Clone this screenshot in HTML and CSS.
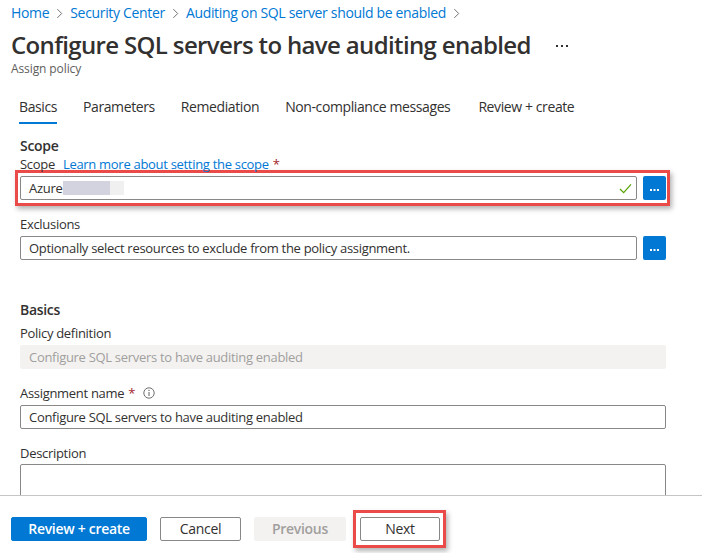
FILE: index.html
```html
<!DOCTYPE html>
<html lang="en">
<head>
<meta charset="utf-8">
<title>Configure SQL servers to have auditing enabled</title>
<link rel="stylesheet" href="styles.css">
</head>
<body>
<div class="page">
  <div class="main">
    <nav class="crumbs">
      <a class="crumb">Home</a>
      <svg class="chev" viewBox="0 0 8 12" width="7" height="11"><path d="M1.5 1 L6.5 6 L1.5 11" fill="none" stroke="#605e5c" stroke-width="1"/></svg>
      <a class="crumb">Security Center</a>
      <svg class="chev" viewBox="0 0 8 12" width="7" height="11"><path d="M1.5 1 L6.5 6 L1.5 11" fill="none" stroke="#605e5c" stroke-width="1"/></svg>
      <a class="crumb">Auditing on SQL server should be enabled</a>
      <svg class="chev" viewBox="0 0 8 12" width="7" height="11"><path d="M1.5 1 L6.5 6 L1.5 11" fill="none" stroke="#605e5c" stroke-width="1"/></svg>
    </nav>
    <div class="title-row">
      <h1 class="title">Configure SQL servers to have auditing enabled</h1>
      <svg class="more" viewBox="0 0 12 3" width="12" height="3"><rect x="0" y="0" width="2" height="2" fill="#323130"/><rect x="5" y="0" width="2" height="2" fill="#323130"/><rect x="10" y="0" width="2" height="2" fill="#323130"/></svg>
    </div>
    <div class="subtitle">Assign policy</div>

    <div class="tabs">
      <span class="tab active">Basics</span>
      <span class="tab">Parameters</span>
      <span class="tab">Remediation</span>
      <span class="tab">Non-compliance messages</span>
      <span class="tab tab-last">Review + create</span>
    </div>

    <div class="form">
      <div class="section-head">Scope</div>
      <div class="label">Scope <a class="link">Learn more about setting the scope</a><span class="req">*</span></div>
      <div class="highlight hl-scope">
        <div class="picker">
          <div class="field">
            <span class="val">Azure</span><span class="redact"></span><span class="redact2"></span>
            <svg class="check" viewBox="0 0 14 12" width="13" height="11"><path d="M1 6.5 L5 10.5 L13 1.5" fill="none" stroke="#57a300" stroke-width="1.3"/></svg>
          </div>
          <button class="dots"><svg viewBox="0 0 9 2" width="9" height="2"><rect x="0" y="0" width="2" height="2" fill="#fff"/><rect x="3.5" y="0" width="2" height="2" fill="#fff"/><rect x="7" y="0" width="2" height="2" fill="#fff"/></svg></button>
        </div>
      </div>

      <div class="label lbl-excl">Exclusions</div>
      <div class="picker picker-excl">
        <div class="field"><span class="val">Optionally select resources to exclude from the policy assignment.</span></div>
        <button class="dots"><svg viewBox="0 0 9 2" width="9" height="2"><rect x="0" y="0" width="2" height="2" fill="#fff"/><rect x="3.5" y="0" width="2" height="2" fill="#fff"/><rect x="7" y="0" width="2" height="2" fill="#fff"/></svg></button>
      </div>

      <div class="section-head sh-basics">Basics</div>
      <div class="label lbl-pd">Policy definition</div>
      <div class="field wide disabled"><span class="val">Configure SQL servers to have auditing enabled</span></div>

      <div class="label lbl-gap">Assignment name<span class="req">*</span>
        <svg class="info" viewBox="0 0 12 12" width="12" height="12"><circle cx="6" cy="6" r="5.2" fill="none" stroke="#605e5c" stroke-width="0.9"/><line x1="6" y1="5" x2="6" y2="9" stroke="#605e5c" stroke-width="1"/><circle cx="6" cy="3.4" r="0.65" fill="#605e5c"/></svg>
      </div>
      <div class="field wide"><span class="val">Configure SQL servers to have auditing enabled</span></div>

      <div class="label lbl-gap">Description</div>
      <div class="textarea"></div>
    </div>
  </div>

  <footer class="footer">
    <button class="btn primary">Review + create</button>
    <button class="btn">Cancel</button>
    <button class="btn disabled-btn">Previous</button>
    <div class="highlight hl-next"><button class="btn">Next</button></div>
  </footer>
</div>
</body>
</html>
```
FILE: styles.css
```css
* { box-sizing: border-box; }
html, body { margin: 0; padding: 0; background: #fff; }
body {
  font-family: "Open Sans", "Noto Sans", sans-serif;
  color: #323130;
  width: 702px;
  height: 553px;
  overflow: hidden;
  letter-spacing: -0.3px;
}
.page {
  height: 553px;
  display: flex;
  flex-direction: column;
}
.main {
  flex: 1;
  overflow: hidden;
  min-height: 0;
}
.crumbs {
  display: flex;
  align-items: center;
  height: 24px;
  padding: 2px 0 0 11px;
  font-size: 14px;
  line-height: 20px;
  letter-spacing: -0.33px;
}
.crumb { color: #0078d4; }
.chev { margin: 0 7px 0 7px; }
.title-row {
  display: flex;
  align-items: center;
  margin-top: 5px;
  padding-left: 11px;
  height: 32px;
}
.title {
  margin: 0;
  font-size: 24px;
  font-weight: 600;
  line-height: 32px;
  letter-spacing: -0.64px;
}
.more {
  margin-left: 25px;
  margin-top: 3px;
}
.subtitle {
  padding-left: 11px;
  font-size: 12px;
  line-height: 16px;
  color: #605e5c;
  letter-spacing: -0.1px;
}
.tabs {
  display: flex;
  gap: 26px;
  margin-top: 20px;
  padding-left: 19px;
  font-size: 14px;
  line-height: 20px;
  letter-spacing: -0.4px;
}
.tab {
  padding-bottom: 5px;
  border-bottom: 2px solid transparent;
}
.tab.active { border-bottom-color: #0078d4; }
.tab-last { margin-left: 2px; }

.form {
  padding-left: 20px;
  width: 666px;
}
.section-head {
  margin-top: 12px;
  font-size: 14px;
  font-weight: 600;
  line-height: 20px;
}
.sh-basics { margin-top: 40px; }
.label {
  display: flex;
  align-items: center;
  font-size: 13px;
  line-height: 16px;
  height: 16px;
}
.label .link { color: #0078d4; margin-left: 8px; }
.req { color: #a4262c; margin-left: 4px; }
.info { margin-left: 8px; }
.lbl-excl { margin-top: 10px; }
.lbl-pd { margin-top: 5px; }
.lbl-gap { margin-top: 16px; }

.highlight {
  border: 3px solid #ea4a48;
  box-shadow: 2px 3px 5px rgba(0, 0, 0, 0.3);
}
.hl-scope {
  margin: -2px -4px 0 -5px;
  padding: 3px 1px 3px 2px;
}
.picker {
  display: flex;
  gap: 6px;
  align-items: flex-start;
}
.picker-excl { margin-top: 4px; }
.field {
  flex: 1;
  display: flex;
  align-items: center;
  height: 24px;
  border: 1px solid #8a8886;
  border-radius: 2px;
  padding: 0 8px;
  font-size: 13px;
  white-space: nowrap;
  overflow: hidden;
}
.field .val { line-height: 20px; }
.redact {
  display: inline-block;
  width: 47px;
  height: 14px;
  background: #d2d3df;
  margin-left: 1px;
}
.redact2 {
  display: inline-block;
  width: 14px;
  height: 14px;
  background: #f1f0f0;
}
.check { margin-left: auto; margin-right: -4px; }
.dots {
  width: 23px;
  height: 24px;
  border: none;
  border-radius: 2px;
  background: #0078d4;
  display: flex;
  align-items: center;
  justify-content: center;
  padding: 3px 0 0;
}
.field.wide { margin-top: 4px; flex: none; width: 646px; }
.field.disabled {
  background: #f3f2f1;
  border-color: #f3f2f1;
  color: #a19f9d;
}
.textarea {
  margin-top: 3px;
  width: 646px;
  height: 60px;
  border: 1px solid #8a8886;
  border-radius: 2px;
}

.footer {
  height: 58px;
  flex: none;
  border-top: 1px solid #c8c6c4;
  display: flex;
  align-items: flex-start;
  gap: 13px;
  padding: 21px 0 0 11px;
}
.btn {
  height: 24px;
  padding: 0 12px;
  border: 1px solid #8a8886;
  border-radius: 2px;
  background: #fff;
  color: #323130;
  font-family: inherit;
  font-size: 14px;
  line-height: 20px;
  letter-spacing: -0.3px;
}
.btn.primary {
  width: 136px;
  background: #0078d4;
  border-color: #0078d4;
  color: #fff;
  font-weight: 600;
}
.btn:nth-child(2) { width: 81px; }
.btn.disabled-btn {
  width: 92px;
  background: #f3f2f1;
  border-color: #f3f2f1;
  color: #a19f9d;
  font-weight: 600;
}
.hl-next {
  margin: -7px 0 0 -6px;
  padding: 4px 3px 4px 4px;
}
.hl-next .btn { width: 80px; display: block; }
```
